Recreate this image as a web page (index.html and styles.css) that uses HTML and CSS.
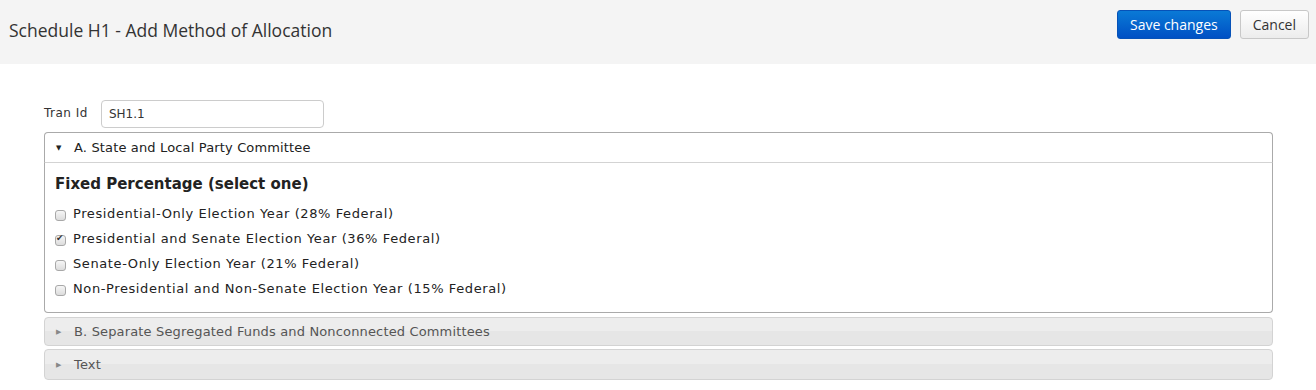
FILE: index.html
```html
<!DOCTYPE html>
<html lang="en">
<head>
    <meta charset="UTF-8">
    <title>Schedule H1 - Add Method of Allocation</title>
    <link rel="stylesheet" href="styles.css">
</head>
<body>
    <header class="page-header">
        <h1>Schedule H1 - Add Method of Allocation</h1>
        <div class="actions">
            <button type="button" class="btn btn-primary">Save changes</button>
            <button type="button" class="btn btn-default">Cancel</button>
        </div>
    </header>

    <form class="form-body">
        <div class="field">
            <label for="tran-id">Tran Id</label>
            <input type="text" id="tran-id" value="SH1.1">
        </div>

        <div class="accordion">
            <h3 class="acc-header acc-open">
                <span class="acc-icon">&#9660;</span>A. State and Local Party Committee
            </h3>
            <div class="acc-content">
                <h4>Fixed Percentage (select one)</h4>
                <label class="check"><span class="box"></span>Presidential-Only Election Year (28% Federal)</label>
                <label class="check"><span class="box checked"></span>Presidential and Senate Election Year (36% Federal)</label>
                <label class="check"><span class="box"></span>Senate-Only Election Year (21% Federal)</label>
                <label class="check"><span class="box"></span>Non-Presidential and Non-Senate Election Year (15% Federal)</label>
            </div>

            <h3 class="acc-header">
                <span class="acc-icon">&#9654;</span>B. Separate Segregated Funds and Nonconnected Committees
            </h3>
            <h3 class="acc-header">
                <span class="acc-icon">&#9654;</span>Text
            </h3>
        </div>
    </form>
</body>
</html>
```

FILE: styles.css
```css
body {
    margin: 0;
    padding: 0;
    background-color: #ffffff;
    font-family: 'DejaVu Sans', Verdana, sans-serif;
    color: #222222;
}

.page-header {
    display: flex;
    align-items: flex-start;
    justify-content: space-between;
    height: 64px;
    background-color: #f4f4f4;
    box-sizing: border-box;
    padding: 10px 7px 0 9px;
}

.page-header h1 {
    font-family: 'Open Sans', sans-serif;
    font-weight: 400;
    font-size: 17.5px;
    color: #333333;
    margin: 8px 0 0;
}

.actions {
    display: flex;
    gap: 9px;
}

.btn {
    font-family: 'Open Sans', sans-serif;
    font-size: 14px;
    height: 29px;
    padding: 0 12px;
    border-radius: 3px;
    cursor: pointer;
}

.btn-primary {
    color: #ffffff;
    background: linear-gradient(to bottom, #0a7ad6, #0050c4);
    border: 1px solid #0652b8;
}

.btn-default {
    color: #333333;
    background: linear-gradient(to bottom, #ffffff, #ececec);
    border: 1px solid #c8c8c8;
}

.form-body {
    padding: 36px 43px 0 44px;
}

.field {
    display: flex;
    align-items: center;
    gap: 13px;
    margin-bottom: 4px;
}

.field label {
    font-size: 12px;
    letter-spacing: 0.5px;
    color: #333333;
    margin-top: -2px;
}

.field input {
    width: 223px;
    height: 28px;
    box-sizing: border-box;
    border: 1px solid #cccccc;
    border-radius: 4px;
    padding: 0 7px;
    font-family: 'DejaVu Sans', Verdana, sans-serif;
    font-size: 12px;
    color: #333333;
}

.acc-header {
    display: flex;
    align-items: center;
    box-sizing: border-box;
    margin: 4px 0 0;
    height: 29px;
    padding: 0 0 0 11px;
    font-size: 13px;
    letter-spacing: 0.15px;
    font-weight: 400;
    color: #555555;
    border: 1px solid #d3d3d3;
    border-radius: 4px;
    background: linear-gradient(to bottom, #ededed 50%, #e6e6e6 50%);
}

.acc-header + .acc-header {
    margin-top: 3px;
    height: 31px;
}

.acc-header.acc-open {
    margin-top: 0;
    height: 31px;
    color: #212121;
    background: #ffffff;
    border-color: #aaaaaa;
    border-bottom-color: #d3d3d3;
    border-radius: 4px 4px 0 0;
}

.acc-icon {
    font-size: 7px;
    width: 18px;
    letter-spacing: 0;
    color: #888888;
}

.acc-open .acc-icon {
    color: #222222;
}

.acc-content {
    border: 1px solid #aaaaaa;
    border-top: none;
    border-radius: 0 0 4px 4px;
    padding: 12px 10px 14px;
    height: 123px;
}

.acc-content h4 {
    font-size: 15px;
    font-weight: 700;
    margin: 0 0 8px;
    color: #222222;
}

.check {
    display: flex;
    align-items: center;
    font-size: 13px;
    letter-spacing: 0.6px;
    height: 25px;
    color: #222222;
}

.box {
    display: inline-block;
    width: 9px;
    height: 9px;
    margin: 3px 7px 0 0;
    border: 1px solid #a8a8a8;
    border-radius: 3px;
    background: linear-gradient(to bottom, #f6f6f6, #dcdcdc);
    position: relative;
}

.box.checked::after {
    content: "\2714";
    position: absolute;
    left: 0;
    top: -3px;
    font-size: 9px;
    letter-spacing: 0;
    color: #333333;
}
```
